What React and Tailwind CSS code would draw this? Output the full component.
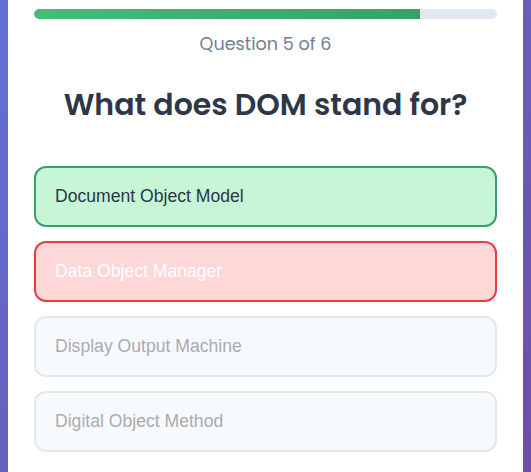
import React from 'react';

const options = [
    { text: 'Document Object Model', state: 'correct' },
    { text: 'Data Object Manager', state: 'wrong' },
    { text: 'Display Output Machine', state: 'idle' },
    { text: 'Digital Object Method', state: 'idle' },
];

const styles = {
    correct: 'bg-[#c6f6d5] border-[#38a169] text-[#2d3748]',
    wrong: 'bg-[#fed7d7] border-[#e53e3e] text-white',
    idle: 'bg-[#f7fafc] border-[#e2e8f0] text-[#ababb0]',
};

export default function App() {
    const current = 5;
    const total = 6;

    return (
        <div className="h-[472px] overflow-hidden bg-[linear-gradient(135deg,#6270d6_0%,#6e4ea6_100%)] px-[8px]">
            <div className="h-full bg-white px-[26px] pt-[9px]">
                {/* progress */}
                <div className="h-[10px] w-full rounded-full bg-[#e2e8f0] overflow-hidden">
                    <div
                        className="h-full rounded-l-full bg-[linear-gradient(90deg,#48bb78,#38a169)]"
                        style={{ width: `${(current / total) * 100}%` }}
                    />
                </div>
                <p className="mt-[12px] text-center text-[17.6px] leading-[26px] text-[#718096] font-['Poppins','Open_Sans',sans-serif]">
                    Question {current} of {total}
                </p>
                <h1 className="mt-[30px] text-center text-[30px] leading-[36px] font-semibold text-[#2d3748] font-['Poppins','Open_Sans',sans-serif]">
                    What does DOM stand for?
                </h1>
                <div className="mt-[43px] flex flex-col gap-[14px]">
                    {options.map((o) => (
                        <button
                            key={o.text}
                            className={`w-full text-left rounded-xl border-2 px-[19px] py-[18px] text-[17.6px] leading-[21px] font-['Liberation_Sans',Arial,sans-serif] ${styles[o.state]}`}
                        >
                            {o.text}
                        </button>
                    ))}
                </div>
            </div>
        </div>
    );
}
